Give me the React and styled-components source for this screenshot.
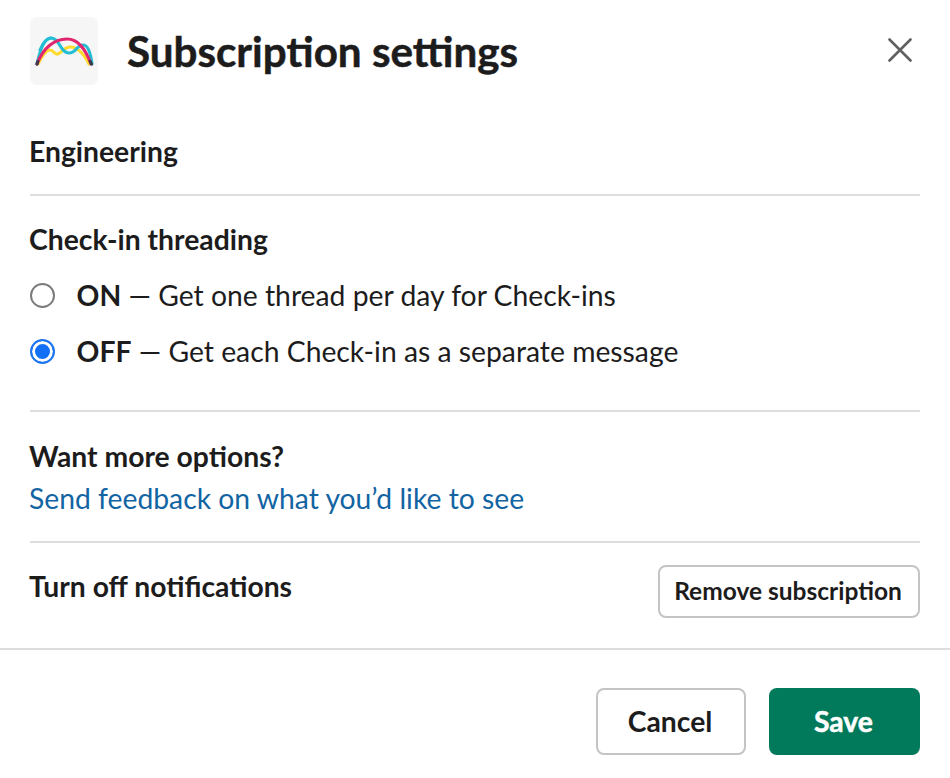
import React from "react";
import styled, { createGlobalStyle } from "styled-components";

const Global = createGlobalStyle`
  html, body { margin: 0; padding: 0; background: #fff; }
  body { font-family: Lato, "Noto Sans", sans-serif; color: #1d1c1d; }
`;

const Modal = styled.div`
  width: 950px;
  height: 778px;
  display: flex;
  flex-direction: column;
  overflow: hidden;
  background: #fff;
`;

const Header = styled.header`
  display: flex;
  align-items: center;
  height: 68px;
  margin-top: 17px;
  padding: 0 38px 0 30px;
`;

const LogoTile = styled.div`
  width: 68px;
  height: 68px;
  border-radius: 7px;
  background: #f6f6f6;
  display: flex;
  flex: none;
`;

const Title = styled.h1`
  flex: 1;
  margin: 0 0 0 29px;
  font-size: 42.2px;
  line-height: 68px;
  font-weight: 700;
  -webkit-text-stroke: 0.5px #1d1c1d;
`;

const Close = styled.button`
  border: 0;
  background: none;
  padding: 0 0 2px;
  display: flex;
  color: #616061;
`;

const Body = styled.div`
  padding: 0 30px;
  display: flex;
  flex-direction: column;
`;

const Section = styled.section`
  border-bottom: 2px solid #dddddd;
  height: ${(p) => p.$h}px;
  padding-top: ${(p) => p.$top}px;
  box-sizing: border-box;
  flex: none;
`;

const Label = styled.div`
  font-size: 28.3px;
  line-height: 36px;
  font-weight: 700;
  margin-left: -1px;
`;

const Options = styled.div`
  margin-top: 20px;
  display: flex;
  flex-direction: column;
  gap: 20px;
`;

const Option = styled.label`
  display: flex;
  align-items: center;
  height: 36px;
  font-size: 28.3px;
  line-height: 36px;
`;

const Radio = styled.span`
  width: 25px;
  height: 25px;
  border-radius: 50%;
  box-sizing: border-box;
  flex: none;
  margin-right: 21.6px;
  background: ${(p) => (p.$on ? "#1170f5" : "#fff")};
  border: 2px solid ${(p) => (p.$on ? "#1d76f0" : "#7c7b7c")};
  box-shadow: ${(p) => (p.$on ? "inset 0 0 0 3px #fff" : "none")};
`;

const Link = styled.a`
  display: block;
  margin: 6px 0 0 -1px;
  font-size: 28.3px;
  line-height: 36px;
  color: #1264a3;
`;

const Row = styled.div`
  display: flex;
  align-items: flex-start;
  justify-content: space-between;
  height: 105px;
  padding-top: 22px;
  box-sizing: border-box;
`;

const RowLabel = styled(Label)`
  margin-top: 3px;
`;

const GhostButton = styled.button`
  height: 53px;
  width: 262px;
  padding: 0 2px 1px 0;
  border: 2px solid #c4c4c4;
  border-radius: 8px;
  background: #fff;
  color: #1d1c1d;
  font: 700 24.5px/1 Lato, sans-serif;
`;

const Footer = styled.footer`
  border-top: 2px solid #dddddd;
  flex: 1;
  display: flex;
  justify-content: flex-end;
  align-items: flex-start;
  gap: 23px;
  padding: 38px 30px 0;
`;

const FooterButton = styled.button`
  height: 67px;
  width: ${(p) => p.$w}px;
  padding: 0 2px 0 0;
  border-radius: 8px;
  box-sizing: border-box;
  font: 700 28.3px/1 Lato, sans-serif;
  background: ${(p) => (p.$primary ? "#007a5a" : "#fff")};
  color: ${(p) => (p.$primary ? "#fff" : "#1d1c1d")};
  border: ${(p) => (p.$primary ? "none" : "2px solid #c4c4c4")};
  -webkit-text-stroke: ${(p) => (p.$primary ? "0.5px #fff" : "0")};
`;

const Logo = () => (
  <svg width="68" height="68" viewBox="30 17 68 68" fill="none" strokeWidth="3.1" strokeLinecap="round">
    <path d="M38 64 C42 56 46 50 50 50 C54 50 54 55 58 54 C62 53 64 47 70 47 C78 47 85 56 89 64" stroke="#ffdb2e" />
    <path d="M37 64 C40 50 44 38 51 38 C60 38 60 53 69 53 C77 53 76 45 83 45 C89 45 91 56 92 64" stroke="#25bdd3" />
    <path d="M37 64 C43 48 54 39 67 39 C78 39 85 48 91 64" stroke="#e0266e" />
    <path d="M40 50 C43 43 46 38 51 38" stroke="#25bdd3" />
    <path d="M37 64 L37.8 61.5 M90.2 61.5 L91.5 64" stroke="#3b3a48" />
  </svg>
);

const X = () => (
  <svg width="24" height="24" viewBox="0 0 24 24" fill="none" stroke="currentColor" strokeWidth="2.6" strokeLinecap="round">
    <path d="M1.5 1.5 L22.5 22.5 M22.5 1.5 L1.5 22.5" />
  </svg>
);

export default function App() {
  return (
    <Modal>
      <Global />
      <Header>
        <LogoTile><Logo /></LogoTile>
        <Title>Subscription settings</Title>
        <Close aria-label="Close"><X /></Close>
      </Header>
      <Body>
        <Section $h={111} $top={48}>
          <Label>Engineering</Label>
        </Section>
        <Section $h={216} $top={25}>
          <Label>Check-in threading</Label>
          <Options>
            <Option><Radio /><span><b>ON</b> — Get one thread per day for Check-ins</span></Option>
            <Option><Radio $on /><span><b>OFF</b> — Get each Check-in as a separate message</span></Option>
          </Options>
        </Section>
        <Section $h={131} $top={26}>
          <Label>Want more options?</Label>
          <Link>Send feedback on what you’d like to see</Link>
        </Section>
        <Row>
          <RowLabel>Turn off notifications</RowLabel>
          <GhostButton>Remove subscription</GhostButton>
        </Row>
      </Body>
      <Footer>
        <FooterButton $w={150}>Cancel</FooterButton>
        <FooterButton $primary $w={151}>Save</FooterButton>
      </Footer>
    </Modal>
  );
}
